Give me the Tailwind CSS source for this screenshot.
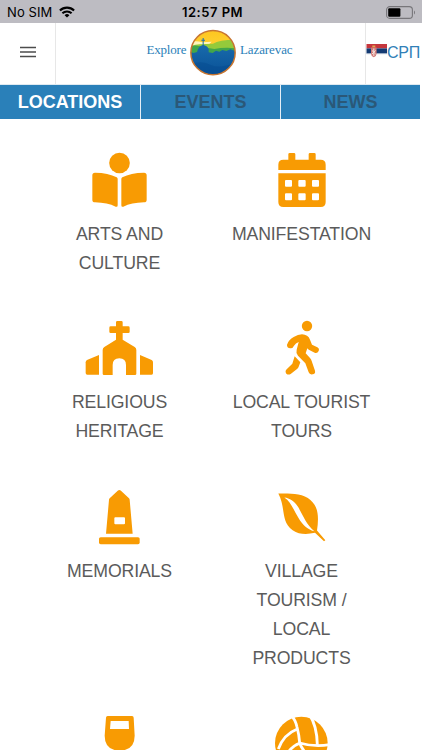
<!DOCTYPE html>
<html lang="en">

<head>
    <meta charset="UTF-8">
    <meta name="viewport" content="width=device-width, initial-scale=1.0">
    <title>Explore Lazarevac</title>
    <script src="https://cdn.jsdelivr.net/npm/@tailwindcss/browser@4"></script>
</head>

<body class="h-[750px] overflow-hidden bg-white font-['Liberation_Sans',sans-serif]">
    <!-- Status bar -->
    <div class="relative flex h-[23px] items-center justify-between bg-[#bdbcc2] pl-[7px] pr-[6px] pt-px font-['Inter',sans-serif] text-black">
        <div class="flex items-center gap-[7px]">
            <span class="text-[13px] leading-none tracking-[0.1px]">No SIM</span>
            <svg class="h-[12px] w-[16px]" viewBox="0 0 16 12" fill="none" stroke="#000" stroke-width="2.1">
                <path d="M.9 4.5a10.2 10.2 0 0 1 14.2 0" />
                <path d="M3.4 7.3a6.6 6.6 0 0 1 9.2 0" />
                <path d="M8 11.6 5.6 9.2a3.4 3.4 0 0 1 4.8 0Z" fill="#000" stroke="none" />
            </svg>
        </div>
        <span class="absolute left-[182px] whitespace-nowrap text-[13px] font-semibold leading-none tracking-[0.5px]">12:57 PM</span>
        <svg class="h-[13px] w-[30px]" viewBox="0 0 30 13" fill="none">
            <rect x=".6" y=".6" width="25.8" height="11.8" rx="3.2" stroke="#77767a" stroke-width="1.1" />
            <rect x="2.2" y="2.3" width="12.2" height="8.4" rx="1" fill="#000" />
            <path d="M28 4.5v4c1.3-.6 1.3-3.4 0-4Z" fill="#77767a" />
        </svg>
    </div>

    <!-- Header -->
    <header class="flex h-[61px]">
        <div class="flex w-[56px] items-center justify-center border-r border-[#e7e7e7] pb-[3px]">
            <svg class="h-[12px] w-[16px]" viewBox="0 0 16 12" stroke="#4c4c4c" stroke-width="1.4">
                <path d="M0 1.5h16M0 6h16M0 10.5h16" />
            </svg>
        </div>
        <div class="flex flex-1 items-start pl-[90.5px] pt-[5px] font-['Liberation_Serif',serif] text-[13px] text-[#2b7fb9]">
            <span class="w-[42.5px] pt-[14px] leading-[16px] tracking-[-0.2px]">Explore</span>
            <svg class="h-[49px] w-[48px]" viewBox="12 9 144 147">
                <defs>
                    <clipPath id="disc"><circle cx="84" cy="83" r="66" /></clipPath>
                    <linearGradient id="sky" x1="0" y1="0" x2="0" y2="1">
                        <stop offset="0" stop-color="#fec51c" />
                        <stop offset="1" stop-color="#ffe35a" />
                    </linearGradient>
                    <linearGradient id="town" x1="0" y1="0" x2="0" y2="1">
                        <stop offset="0" stop-color="#1b70b0" />
                        <stop offset="1" stop-color="#064a91" />
                    </linearGradient>
                </defs>
                <g clip-path="url(#disc)">
                    <path d="M12 10h144v146H12z" fill="url(#sky)" />
                    <path d="M12 52q20-6 40 0l28-2-20 20H12Z" fill="#fff6bd" />
                    <path d="M12 66q16-8 32-8l40-2q20-12 72-12v60H12Z" fill="#94ca3b" />
                    <path d="M12 66q16-8 32-2 28 6 44 8 30-6 68-2v50H12Z" fill="#42a64a" />
                    <path d="M12 80l14 4 10-3 3-9q3-9 14-12V47h-4v-3h4v-5h3v5h4v3h-4v13q12 3 15 12v10l12 2 10-7 10 3 9-5 12 3 12-5 18 6v96H12Z" fill="url(#town)" />
                    <path d="M12 118q40-14 65 2 30 12 79-8v56H12Z" fill="#05498f" opacity=".45" />
                </g>
                <circle cx="84" cy="83" r="66.5" fill="none" stroke="#c87530" stroke-width="4.5" />
            </svg>
            <span class="pl-[3px] pt-[14px] leading-[16px] tracking-[-0.1px]">Lazarevac</span>
        </div>
        <div class="flex w-[57px] items-start border-l border-[#e7e7e7] pt-[20px]">
            <svg class="mt-px h-[14px] w-[21px] shrink-0" viewBox="0 0 21 14">
                <path d="M.5 0H21v4.4H.5z" fill="#c6363c" />
                <path d="M.5 4.4H21v5.2H.5z" fill="#143a72" />
                <path d="M.5 9.6H21v.8H.5z" fill="#dfe3ea" />
                <path d="M5 3.5h5.6v6q0 2.6-2.8 3.8Q5 12.1 5 9.5Z" fill="#d07a78" />
                <path d="M6.3 1.5h3v1.8h-3z" fill="#e0a851" />
                <path d="M7.8 4.5v7.5M6 6.5l3.6 3.5M9.6 6.5 6 10" stroke="#f3e3dd" stroke-width="1" />
            </svg>
            <span class="text-[16px] leading-[20px] tracking-[-0.2px] text-[#3180b7]">СРП</span>
        </div>
    </header>

    <!-- Tabs -->
    <nav class="mr-[2px] grid h-[35px] grid-cols-[140px_139px_139px] gap-px border-y border-[#dfeaf1] bg-[#e6eff6] text-center text-[18px] font-bold leading-[34px] text-[#2a5878]">
        <div class="bg-[#2a80b9] text-white">LOCATIONS</div>
        <div class="bg-[#2a80b9]">EVENTS</div>
        <div class="bg-[#2a80b9]">NEWS</div>
    </nav>

    <!-- Categories -->
    <main class="ml-[28.5px] mt-[29px] grid grid-cols-[182px_182px] gap-y-[38.3px] text-center text-[17.7px] leading-[29px] tracking-[-0.13px] text-[#5b5b5b]">
        <div class="flex flex-col items-center gap-[8px]">
            <svg class="h-[64px] w-[72px]" viewBox="72 24 216 192" fill="#f89b03">
                <circle cx="178.5" cy="69" r="31" />
                <path d="M105 98q40 0 65 14 3 2 3 5v79q0 6-6 4-24-12-62-13-8 0-8-8v-73q0-8 8-8Z" />
                <path d="M252 98q-40 0-65 14-3 2-3 5v79q0 6 6 4 24-12 62-13 8 0 8-8v-73q0-8-8-8Z" />
            </svg>
            <div>ARTS AND<br>CULTURE</div>
        </div>
        <div class="flex flex-col items-center gap-[8px]">
            <svg class="h-[64px] w-[72px]" viewBox="123 24 216 192" fill="#f89b03">
                <path d="M160 90V74q0-15 15-15h15V43q0-4 4-4h13q4 0 4 4v16h40V43q0-4 4-4h13q4 0 4 4v16h15q15 0 15 15v16Z" />
                <path fill-rule="evenodd" d="M160 100h142v86q0 15-15 15H175q-15 0-15-15ZM183 120q-3 0-3 3v14q0 3 3 3h15q3 0 3-3v-14q0-3-3-3ZM223 120q-3 0-3 3v14q0 3 3 3h16q3 0 3-3v-14q0-3-3-3ZM264 120q-3 0-3 3v14q0 3 3 3h15q3 0 3-3v-14q0-3-3-3ZM183 160q-3 0-3 3v15q0 3 3 3h15q3 0 3-3v-15q0-3-3-3ZM223 160q-3 0-3 3v15q0 3 3 3h16q3 0 3-3v-15q0-3-3-3ZM264 160q-3 0-3 3v15q0 3 3 3h15q3 0 3-3v-15q0-3-3-3Z" />
            </svg>
            <div>MANIFESTATION</div>
        </div>

        <div class="flex flex-col items-center gap-[8px]">
            <svg class="h-[64px] w-[72px]" viewBox="72 20 216 192" fill="#f89b03">
                <path d="M168 39q0-4 4-4h12q4 0 4 4v12h17q4 0 4 4v12q0 4-4 4h-17v20l36 22q5 3 5 9v71q0 4-4 4h-27v-30q0-20-20-20t-20 20v30h-26q-4 0-4-4v-71q0-6 5-9l35-22V71h-16q-4 0-4-4V55q0-4 4-4h16Z" />
                <path d="M117 137v59H82q-5 0-5-5v-32q0-5 4-7Z" />
                <path d="M240 137v59h35q4 0 4-5v-32q0-5-4-7Z" />
            </svg>
            <div>RELIGIOUS<br>HERITAGE</div>
        </div>
        <div class="flex flex-col items-center gap-[8px]">
            <svg class="h-[64px] w-[72px]" viewBox="123 20 216 192" fill="#f89b03">
                <circle cx="246" cy="50" r="15.5" />
                <path d="M186 106q5-15 20-23 13-8 25-8 18 1 24 16l6 15 16 8q7 4 4 11-4 8-12 5l-16-8q-4-2-6-5l-5 15 13 14q4 4 5 9l10 29q2 10-7 11-9 2-12-6l-10-27-22-23q-7-8-4-18l6-23q-9 3-14 11-4 9-11 8-11-2-10-11Z" />
                <path d="M209 141l17 18-5 13q-1 3-4 6l-20 16q-7 4-13-1-5-7 1-13l17-17Z" />
            </svg>
            <div>LOCAL TOURIST<br>TOURS</div>
        </div>

        <div class="flex flex-col items-center gap-[8px]">
            <svg class="h-[64px] w-[72px]" viewBox="72 14.5 216 192" fill="#f89b03">
                <path fill-rule="evenodd" d="M174 31q4-3 8 0l25 23q2 2 2 5l9 102h-80l9-102q0-3 2-5ZM166 111q-3 0-3 3v15q0 3 3 3h26q3 0 3-3v-15q0-3-3-3Z" />
                <rect x="117" y="171" width="122" height="21" rx="5" />
            </svg>
            <div>MEMORIALS</div>
        </div>
        <div class="flex flex-col items-center gap-[8px]">
            <svg class="h-[64px] w-[72px]" viewBox="93 14.5 216 192" fill="#f89b03">
                <path d="M130 40C165 40 202 38 227 60 250 80 252 110 246 151L271 180 267 183 240 158C214 164 192 163 173 150 136 124 153 82 130 40Z" />
                <path d="M148 52C164 54 178 62 189 80 203 103 214 134 238 153 216 147 203 134 191 114 175 88 167 64 148 52Z" fill="#fff" />
            </svg>
            <div>VILLAGE<br>TOURISM /<br>LOCAL<br>PRODUCTS</div>
        </div>

        <div class="flex flex-col items-center">
            <svg class="h-[64px] w-[72px]" viewBox="-18 36 216 192" fill="#f89b03">
                <path fill-rule="evenodd" d="M53 51h73q5 0 5 5l3 54q0 38-34 44v40h20v12H58v-12h20v-40q-34-6-34-44l4-54q0-5 5-5ZM62 66l-2 24h57l-1-24Z" />
            </svg>
        </div>
        <div class="flex flex-col items-center">
            <svg class="h-[64px] w-[72px]" viewBox="3 36 216 192">
                <circle cx="109" cy="132" r="79" fill="#f89b03" />
                <path d="M77 48Q91 61 96 84 102 106 104 132M97 90Q56 106 40 150M105 132Q78 143 66 166M104 132Q148 145 194 137M133 46Q156 80 157 138M104 132Q114 160 146 182" fill="none" stroke="#fff" stroke-width="8.5" />
            </svg>
        </div>
    </main>
</body>

</html>
